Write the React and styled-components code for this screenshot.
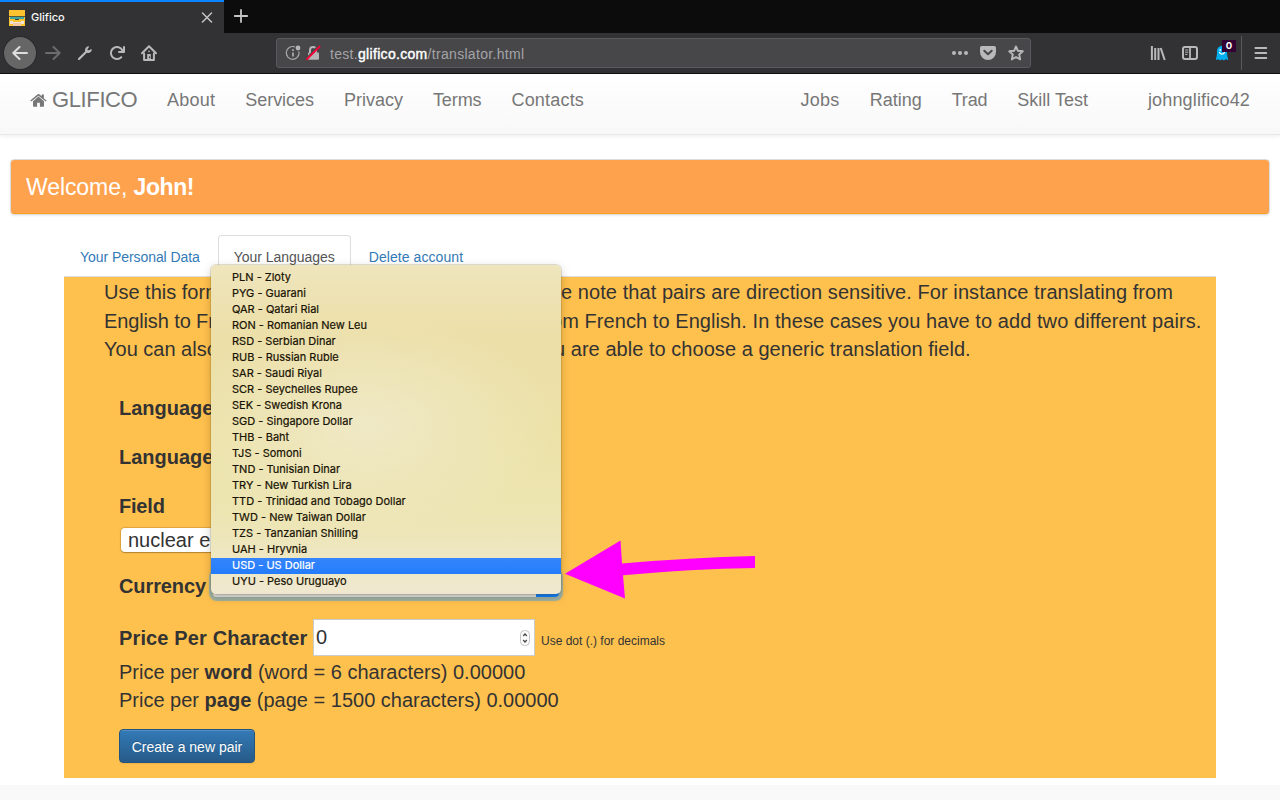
import React from "react";
import styled, { createGlobalStyle } from "styled-components";

const Global = createGlobalStyle`
  * { box-sizing: border-box; }
  html, body { margin: 0; padding: 0; background: #fff; }
  body { font-family: "Liberation Sans", Arial, sans-serif; color: #333; }
`;

const Screen = styled.div`
  position: relative;
  width: 1280px;
  height: 800px;
  overflow: hidden;
  display: flex;
  flex-direction: column;
  background: #fff;
`;

/* ---------- browser chrome ---------- */

const TabStrip = styled.div`
  display: flex;
  height: 33px;
  flex: none;
  background: #0c0c0d;
  color: #f9f9fa;
`;

const BrowserTab = styled.div`
  display: flex;
  align-items: center;
  width: 224px;
  padding: 0 11px 0 9px;
  border-top: 2px solid #0a84ff;
  background: #323234;
  font: 500 11px/16px Inter, sans-serif;
  gap: 6px;
`;

const TabTitle = styled.span`
  flex: 1;
  padding-bottom: 1px;
`;

const NewTab = styled.div`
  display: flex;
  width: 34px;
  padding: 9px 0 0 9px;
`;

const Toolbar = styled.div`
  display: flex;
  align-items: center;
  height: 41px;
  flex: none;
  padding: 0 12px 0 4px;
  background: #323234;
  border-bottom: 1px solid #0f0f10;
`;

const BackButton = styled.div`
  display: flex;
  align-items: center;
  justify-content: center;
  width: 32px;
  height: 32px;
  border-radius: 50%;
  background: #666667;
  box-shadow: 0 0 0 1px #29292b;
`;

const ToolIcons = styled.div`
  display: flex;
  align-items: center;
  gap: 16px;
  margin-left: 9px;
`;

const UrlBar = styled.div`
  display: flex;
  align-items: center;
  width: 755px;
  height: 30px;
  margin-left: 119px;
  padding: 0 6px 0 8px;
  border: 1px solid #5a5a5e;
  border-radius: 3px;
  background: #474749;
`;

const UrlBadges = styled.div`
  display: flex;
  gap: 4px;
`;

const UrlText = styled.div`
  flex: 1;
  margin-left: 9px;
  padding-top: 2px;
  font: 400 14px/18px "Liberation Sans", Arial, sans-serif;
  letter-spacing: 0.31px;
  color: #a4a4a8;
  b { font-weight: 400; color: #fff; -webkit-text-stroke: 0.4px #fff; }
`;

const UrlActions = styled.div`
  display: flex;
  align-items: center;
  gap: 12px;
`;

const RightTools = styled.div`
  display: flex;
  align-items: center;
  margin-left: auto;
  height: 40px;
  gap: 16px;
`;

const GhostButton = styled.div`
  position: relative;
  display: flex;
  width: 16px;
  height: 16px;
`;

const Badge = styled.span`
  position: absolute;
  left: 8px;
  top: -5px;
  width: 14px;
  height: 12px;
  background: #330033;
  color: #fff;
  text-align: center;
  font: 700 9.5px/12px Inter, sans-serif;
`;

const MenuZone = styled.div`
  display: flex;
  align-items: center;
  height: 34px;
  margin-left: -5px;
  padding-left: 12px;
  border-left: 1px solid #5a5a5d;
`;

/* ---------- site header ---------- */

const Navbar = styled.nav`
  display: flex;
  align-items: center;
  height: 61px;
  flex: none;
  padding: 0 15px;
  background: linear-gradient(#fff, #f8f8f8);
  border-bottom: 1px solid #e7e7e7;
  box-shadow: 0 1px 5px rgba(0, 0, 0, 0.075);
  font-size: 18px;
  color: #777;
`;

const Brand = styled.div`
  display: flex;
  align-items: center;
  gap: 5px;
  width: 137px;
  padding: 0 0 9px 15px;
  font-size: 22px;
  line-height: 26px;
  letter-spacing: -0.38px;
`;

const NavLink = styled.span`
  padding: 0 15px 9px;
  line-height: 26px;
  margin-left: ${(p) => p.$left || 0};
  letter-spacing: ${(p) => p.$track || "normal"};
`;

/* ---------- page ---------- */

const Welcome = styled.div`
  margin: 24px 10px 0;
  height: 56px;
  flex: none;
  padding: 0 15px;
  border: 1px solid #dcdcdc;
  border-radius: 4px;
  background: linear-gradient(#ffa24e, #ffa24e 53px, #faa21e 53px);
  box-shadow: 0 1px 2px rgba(0, 0, 0, 0.08);
  color: #fff;
  font-size: 23px;
  line-height: 55px;
  letter-spacing: -0.08px;
  b { letter-spacing: -0.4px; }
`;

const Tabs = styled.div`
  display: flex;
  flex: none;
  height: 42px;
  margin: 20px 64px 0;
  border-bottom: 1px solid #ddd;
  gap: 2px;
  font-size: 14px;
`;

const TabLink = styled.div`
  height: 42px;
  padding: 11px 15px 0;
  border: 1px solid ${(p) => (p.$active ? "#ddd" : "transparent")};
  border-bottom: 0;
  border-radius: 4px 4px 0 0;
  background: ${(p) => (p.$active ? "#fff" : "transparent")};
  color: ${(p) => (p.$active ? "#555" : "#337ab7")};
  line-height: 20px;
  letter-spacing: ${(p) => p.$track || "normal"};
`;

const Panel = styled.section`
  height: 501px;
  flex: none;
  margin: 0 64px;
  padding: 1px 0 0 40px;
  background: #ffc14e;
  font-size: 20px;
`;

const IntroLine = styled.div`
  display: grid;
  grid-template-columns: 457px 1fr;
  height: 28.57px;
  line-height: 29px;
  white-space: nowrap;
`;

const IntroHead = styled.span`
  letter-spacing: ${(p) => p.$track || "normal"};
`;

const IntroTail = styled.span`
  margin-left: ${(p) => p.$shift || 0};
  letter-spacing: ${(p) => p.$track || "normal"};
`;

const Form = styled.div`
  display: flex;
  flex-direction: column;
  padding-left: 15px;
  margin-top: 30px;
`;

const Label = styled.label`
  height: ${(p) => p.$height || "49px"};
  line-height: 29px;
  font-weight: 700;
  letter-spacing: ${(p) => p.$track || "normal"};
`;

const FieldSelect = styled.div`
  width: 300px;
  height: 24px;
  margin: 7px 0 20px 2px;
  padding-left: 7px;
  border-radius: 4px;
  background: #fff;
  box-shadow: 0 0 1px 1px rgba(160, 110, 30, 0.35), 0 1px 1px rgba(0, 0, 0, 0.25);
  line-height: 25px;
`;

const PriceRow = styled.div`
  display: flex;
  align-items: center;
  height: 37px;
  margin-bottom: 1px;
`;

const PriceLabel = styled.label`
  width: 194px;
  font-weight: 700;
  letter-spacing: 0.14px;
`;

const PriceInput = styled.div`
  display: flex;
  align-items: center;
  justify-content: space-between;
  width: 222px;
  height: 37px;
  margin-bottom: 2px;
  padding: 1px 4px 0 2px;
  border: 1px solid #ccc;
  background: #fff;
`;

const Hint = styled.span`
  margin: 5px 0 0 6px;
  font-size: 12px;
`;

const Estimate = styled.div`
  height: 28.5px;
  line-height: 29px;
`;

const CreateButton = styled.button`
  align-self: flex-start;
  width: 136px;
  height: 34px;
  margin-top: 14px;
  padding: 2px 0 0;
  border: 1px solid #245580;
  border-radius: 4px;
  background: linear-gradient(#337ab7, #265a88);
  box-shadow: inset 0 1px 0 rgba(255, 255, 255, 0.15), 0 1px 1px rgba(0, 0, 0, 0.075);
  color: #fff;
  font: 14px/20px "Liberation Sans", Arial, sans-serif;
  text-shadow: 0 -1px 0 rgba(0, 0, 0, 0.2);
`;

const Footer = styled.footer`
  height: 15px;
  flex: none;
  margin-top: 7px;
  background: #f9f9f9;
`;

/* ---------- open currency list ---------- */

const CurrencySelect = styled.div`
  position: absolute;
  left: 213px;
  top: 573px;
  width: 346px;
  height: 24px;
  border-radius: 4px;
  background: linear-gradient(90deg, #dfe1e6 323px, #0b7cff 323px);
  box-shadow: 0 0 1px 4px #9cb1a6;
`;

const Options = styled.div`
  position: absolute;
  left: 211px;
  top: 265px;
  width: 350px;
  height: 329px;
  padding-top: 5px;
  border-radius: 5px;
  background:
    radial-gradient(ellipse 190px 110px at 155px 160px, rgba(240, 235, 208, 0.75), rgba(240, 235, 208, 0) 100%),
    linear-gradient(#efe5bd 0, #ecdfa8 70px, #ece2a8 170px, #ede5b2 250px, #efe8d0 329px);
  box-shadow: 0 0 0 1px rgba(90, 80, 30, 0.16), 0 3px 10px rgba(60, 40, 0, 0.25);
`;

const Option = styled.div`
  height: 16px;
  padding-left: 21px;
  background: ${(p) => (p.$selected ? "linear-gradient(#3585fc, #247cfb)" : "transparent")};
  color: ${(p) => (p.$selected ? "#fff" : "#181203")};
  font: 400 11px/15px Inter, sans-serif;
  -webkit-text-stroke: 0.2px currentColor;
`;

const Pointer = styled.svg`
  position: absolute;
  left: 564px;
  top: 538px;
`;

/* ---------- icons ---------- */

const Icon = ({ size = 16, color = "#b9b9bb", children, ...rest }) => (
  <svg width={size} height={size} viewBox="0 0 16 16" fill="none" stroke={color}
    strokeWidth="2" strokeLinecap="round" strokeLinejoin="round" {...rest}>
    {children}
  </svg>
);

const Favicon = () => (
  <svg width="16" height="16" viewBox="0 0 16 16" shapeRendering="crispEdges">
    <rect width="16" height="16" fill="#fdc22f" />
    <rect y="6" width="16" height="1" fill="#5a5a38" />
    <rect x="1" y="7" width="14" height="2" fill="#3ea69b" />
    <rect x="6" y="9" width="4" height="1" fill="#31453f" />
    <rect x="3" y="10" width="10" height="1" fill="#fdc22f" />
    <rect x="3" y="12" width="10" height="2" fill="#efe3d5" />
    <rect x="4" y="13" width="8" height="3" fill="#f3c9a5" />
    <rect x="1" y="11" width="3" height="3" fill="#efe3d5" />
    <rect x="12" y="11" width="3" height="3" fill="#efe3d5" />
  </svg>
);

const BackIcon = () => (
  <Icon color="#dededf"><path d="M15 8H1.500M7.500 2 1.300 8l6.200 6" /></Icon>
);
const ForwardIcon = () => (
  <Icon color="#6c6c6e"><path d="M1 8h13.500M8.500 2l6.200 6-6.200 6" /></Icon>
);
const WrenchIcon = () => (
  <Icon>
    <path d="M2 14 8.800 7.200" strokeWidth="2.200" />
    <path d="M11.300 1.900C9 2.400 8.200 4.600 8.900 6.800 11 8 13.700 7 14.200 4.800L11.900 6 10 5.800 9.900 4Z" fill="#b9b9bb" strokeWidth="1.300" />
  </Icon>
);
const ReloadIcon = () => (
  <Icon stroke="none">
    <path fill="#b9b9bb" d="M15 1a1 1 0 0 0-1 1v2.418A6.995 6.995 0 1 0 8 15a6.954 6.954 0 0 0 4.95-2.05 1 1 0 0 0-1.414-1.414A5.019 5.019 0 1 1 12.549 6H10a1 1 0 0 0 0 2h5a1 1 0 0 0 1-1V2a1 1 0 0 0-1-1z" />
  </Icon>
);
const HomeIcon = () => (
  <Icon>
    <path d="M1 8.200 8 1.300l7 6.900" />
    <path d="M3.100 8.500V15h9.800V8.500" />
    <path d="M6.200 9h3.600v6H6.200z" fill="#b9b9bb" stroke="none" />
    <path d="M8 6.200v.3" strokeWidth="1.600" />
    <path d="M8.600 11.900v.6" stroke="#323234" strokeWidth="1.200" />
  </Icon>
);
const InfoIcon = () => (
  <Icon color="#a9a9ab">
    <path d="M9.600 1.800A6.400 6.400 0 1 0 14 6.800" strokeWidth="1.200" />
    <circle cx="13" cy="3" r="2.400" fill="#b5b5b7" stroke="none" />
    <path d="M8 7.500v4" strokeWidth="1.800" strokeLinecap="butt" />
    <path d="M8 4.200v1.700" strokeWidth="1.800" strokeLinecap="butt" />
  </Icon>
);
const LockIcon = () => (
  <Icon color="#b5b5b7">
    <path d="M5 8V5a3 3 0 0 1 6 0v3" />
    <rect x="3" y="7.500" width="11" height="7.300" rx="1" fill="#b5b5b7" stroke="none" />
    <path d="M2.400 13 13 1.400" stroke="#474749" strokeWidth="2.200" strokeLinecap="butt" />
    <path d="M2 14.200 14.600 1.600" stroke="#ff0039" strokeWidth="1.900" />
  </Icon>
);
const DotsIcon = () => (
  <Icon stroke="none">
    <g fill="#b9b9bb"><circle cx="2" cy="8" r="2" /><circle cx="8" cy="8" r="2" /><circle cx="14" cy="8" r="2" /></g>
  </Icon>
);
const PocketIcon = () => (
  <Icon>
    <path d="M1.800 1h12.400A1.800 1.800 0 0 1 16 2.800V7A8 8 0 0 1 0 7V2.800A1.800 1.800 0 0 1 1.800 1Z" fill="#b9b9bb" stroke="none" />
    <path d="m4.300 5.800 3.700 3.500 3.700-3.500" stroke="#474749" />
  </Icon>
);
const StarIcon = () => (
  <Icon><path strokeWidth="1.900" d="m8 1.500 1.900 4.300 4.900.5-3.600 3.200 1 4.900L8 12l-4.200 2.400 1-4.900L1.200 6.300l4.900-.5Z" /></Icon>
);
const LibraryIcon = () => (
  <Icon>
    <path strokeLinecap="butt" d="M1.900 1v14M5.200 3v12M8.500 3v12" strokeWidth="2" />
    <path strokeLinecap="butt" d="M10.700 3l4 12" strokeWidth="2" />
  </Icon>
);
const SidebarIcon = () => (
  <Icon>
    <rect x="1" y="2" width="14" height="12" rx="2" strokeWidth="2" />
    <path d="M8 2v12" strokeWidth="1.800" />
    <path d="M3.500 5h2.400M3.500 7.200h2.400M3.500 9.400h1.600" strokeWidth="1" />
  </Icon>
);
const GhostIcon = () => (
  <Icon stroke="none">
    <path fill="#00aef0" d="M8 1C4.600 1 3 3.300 3 6.200c0 4-.5 6-1.100 7.600-.3.900.6 1.500 1.500.8.700-.5 1.400-.3 1.900.3.500.6 1.200.6 1.700 0s1.300-.6 1.800 0 1.300.6 1.800 0 1.200-.8 1.900-.3c1 .7 1.900 0 1.600-.8C13.400 12.200 13 10 13 6.200 13 3.300 11.400 1 8 1Z" />
    <path d="M5.600 7.500c1 2.200 3.800 2.200 4.800 0" stroke="#fff" strokeWidth="1.300" />
    <circle cx="6.300" cy="4.900" r=".9" fill="#fff" />
  </Icon>
);
const BurgerIcon = () => (
  <Icon size={14} strokeWidth="2.300"><path d="M1.700 2.200h12.300M1.700 8h12.300M1.700 13.800h12.300" /></Icon>
);
const HouseGlyph = () => (
  <svg width="17" height="16" viewBox="0 0 17 16" fill="#777">
    <path d="M8.500 4.600 14 9.200V14a.8.8 0 0 1-.8.8H9.900v-4H7.100v4H3.800A.8.8 0 0 1 3 14V9.200Z" />
    <path d="M.3 8.500 7.700 2.300a1.200 1.200 0 0 1 1.600 0l2.300 2V2.600h2.300v3.800l2.700 2.100-.9 1L8.500 3.700 1.200 9.500Z" />
  </svg>
);
const Spinner = () => (
  <svg width="10" height="16" viewBox="0 0 10 16" fill="none">
    <rect x="0.500" y="0.500" width="9" height="15" rx="4" fill="#fafafa" stroke="#c4c4c4" />
    <path d="M3.200 6 5 4l1.800 2M3.200 10 5 12l1.800-2" stroke="#444" strokeWidth="1.200" />
  </svg>
);

const currencies = [
  "PLN - Zloty", "PYG - Guarani", "QAR - Qatari Rial", "RON - Romanian New Leu",
  "RSD - Serbian Dinar", "RUB - Russian Ruble", "SAR - Saudi Riyal", "SCR - Seychelles Rupee",
  "SEK - Swedish Krona", "SGD - Singapore Dollar", "THB - Baht", "TJS - Somoni",
  "TND - Tunisian Dinar", "TRY - New Turkish Lira", "TTD - Trinidad and Tobago Dollar",
  "TWD - New Taiwan Dollar", "TZS - Tanzanian Shilling", "UAH - Hryvnia",
  "USD - US Dollar", "UYU - Peso Uruguayo",
];

export default function App() {
  return (
    <Screen>
      <Global />
      <TabStrip>
        <BrowserTab>
          <Favicon />
          <TabTitle>Glifico</TabTitle>
          <svg width="12" height="12" viewBox="0 0 12 12" stroke="#c4c4c6" strokeWidth="1.500" strokeLinecap="round">
            <path d="m1.500 1 9 9m0-9-9 9" />
          </svg>
        </BrowserTab>
        <NewTab>
          <svg width="16" height="14" viewBox="0 0 16 14" stroke="#c4c4c6" strokeWidth="1.800" strokeLinecap="round">
            <path d="M1.800 7h12.400M8 1v12" />
          </svg>
        </NewTab>
      </TabStrip>
      <Toolbar>
        <BackButton><BackIcon /></BackButton>
        <ToolIcons><ForwardIcon /><WrenchIcon /><ReloadIcon /><HomeIcon /></ToolIcons>
        <UrlBar>
          <UrlBadges><InfoIcon /><LockIcon /></UrlBadges>
          <UrlText>test.<b>glifico.com</b>/translator.html</UrlText>
          <UrlActions><DotsIcon /><PocketIcon /><StarIcon /></UrlActions>
        </UrlBar>
        <RightTools>
          <LibraryIcon />
          <SidebarIcon />
          <GhostButton><GhostIcon /><Badge>0</Badge></GhostButton>
          <MenuZone><BurgerIcon /></MenuZone>
        </RightTools>
      </Toolbar>

      <Navbar>
        <Brand><HouseGlyph />GLIFICO</Brand>
        <NavLink $track="0.25px">About</NavLink>
        <NavLink $track="-0.05px">Services</NavLink>
        <NavLink>Privacy</NavLink>
        <NavLink $track="-0.1px">Terms</NavLink>
        <NavLink $track="0.2px">Contacts</NavLink>
        <NavLink $left="auto" $track="0.3px">Jobs</NavLink>
        <NavLink>Rating</NavLink>
        <NavLink $track="-0.2px">Trad</NavLink>
        <NavLink>Skill Test</NavLink>
        <NavLink $left="30px" $track="0.15px">johnglifico42</NavLink>
      </Navbar>

      <Welcome>Welcome, <b>John!</b></Welcome>

      <Tabs>
        <TabLink $track="-0.06px">Your Personal Data</TabLink>
        <TabLink $active $track="-0.04px">Your Languages</TabLink>
        <TabLink $track="0.07px">Delete account</TabLink>
      </Tabs>

      <Panel>
        <IntroLine>
          <IntroHead>Use this form</IntroHead>
          <IntroTail $track="0.07px">e note that pairs are direction sensitive. For instance translating from</IntroTail>
        </IntroLine>
        <IntroLine>
          <IntroHead $track="-0.12px">English to Fr</IntroHead>
          <IntroTail $shift="-10px" $track="0.066px">om French to English. In these cases you have to add two different pairs.</IntroTail>
        </IntroLine>
        <IntroLine>
          <IntroHead>You can also</IntroHead>
          <IntroTail $shift="-7px" $track="0.04px">u are able to choose a generic translation field.</IntroTail>
        </IntroLine>
        <Form>
          <Label>Language</Label>
          <Label>Language</Label>
          <Label $height="29px" $track="-0.2px">Field</Label>
          <FieldSelect>nuclear e</FieldSelect>
          <Label $height="48px" $track="-0.1px">Currency</Label>
          <PriceRow>
            <PriceLabel>Price Per Character</PriceLabel>
            <PriceInput><span>0</span><Spinner /></PriceInput>
            <Hint>Use dot (.) for decimals</Hint>
          </PriceRow>
          <Estimate>Price per <b>word</b> (word = 6 characters) 0.00000</Estimate>
          <Estimate>Price per <b>page</b> (page = 1500 characters) 0.00000</Estimate>
          <CreateButton>Create a new pair</CreateButton>
        </Form>
      </Panel>
      <Footer />

      <CurrencySelect />
      <Options>
        {currencies.map((name) => (
          <Option key={name} $selected={name.startsWith("USD")}>{name}</Option>
        ))}
      </Options>
      <Pointer width="194" height="64" viewBox="564 538 194 64">
        <path fill="#ff00ff" d="M565 573.700 620.500 540.500 622 563.500Q690 557.500 755 556V568Q690 569 623 575.200L625 598.500Z" />
      </Pointer>
    </Screen>
  );
}
